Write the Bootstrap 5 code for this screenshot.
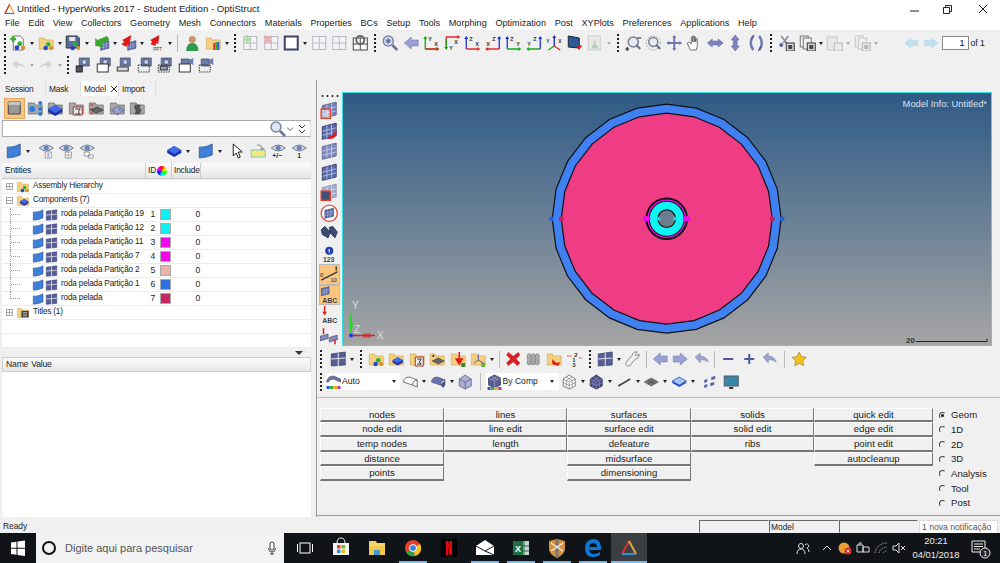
<!DOCTYPE html>
<html lang="en">
<head>
<meta charset="UTF-8">
<title>HyperWorks 2017</title>
<link href="https://cdn.jsdelivr.net/npm/bootstrap@5.3.2/dist/css/bootstrap.min.css" rel="stylesheet">
<style>
html,body{height:100%}
body{width:1000px;height:563px;overflow:hidden;background:#f0f0f0;font:9px/1 "Liberation Sans",Arial,sans-serif;color:#222}
svg text{font-family:"Liberation Sans",Arial,sans-serif}
.title-bar{height:16px;background:#fff;font-size:9.6px;padding:1px 0 0 3px}
.title-bar .app{width:13px;height:12px;margin-right:1px}
.win-btn{width:34px;height:12px}
.menu-bar{height:14px;background:#fff;padding:2px 0 0 5px;gap:8.7px;font-size:9.1px}
.tools{height:50px;padding:3px 0 0 2px}
.tb-row{height:20px;margin-bottom:2px}
.ti{width:20.5px;height:16px;flex:none}
.fd{opacity:.33}
.cr{width:7px;height:16px;flex:none;display:flex;align-items:center;justify-content:center}
.cr::before{content:"";border:2px solid transparent;border-top:3px solid #222;border-bottom:0}
.hd{width:10px;height:20px;flex:none;background:radial-gradient(circle,#222 .9px,transparent 1.2px) center/4px 4px repeat-y}
.hd-s{width:6px}
.vsep{width:1px;height:17px;background:#bbb;flex:none;margin:0 4px}
.vsep-n{margin:0 3px}
.gap-a{margin-left:21.5px}
.page-box{width:27px;height:14px;background:#fff;border:1px solid #888;text-align:right;padding:2px 3px;font-size:9px;color:#111}
.of-txt{margin-left:2px;font-size:8.6px}
.work{height:437px}
.left-pane{width:317px;flex:none;border-right:1px solid #9a9a9a;padding-left:2px;font-size:8.2px;letter-spacing:-.18px}
.tabs{height:15px;margin-top:1px;font-size:8.4px}
.tab-x{height:15px;display:flex;align-items:center;padding:1px 0 0 3px;border-right:1px solid #ddd}
.tab-a{width:44px}.tab-b{width:35px}.tab-c{width:38px;background:#fff}.tab-d{width:37px}
.ic-row{height:22px;padding-left:2px;margin-top:1px}
.ic-on{background:#fbc57e;outline:1px solid #e0a860;outline-offset:-1px;height:21px}
.srch{width:309px;height:17px;background:#fff;border:1px solid #aaa;border-right-color:#ddd;padding-right:4px;margin-top:1px}
.srch .ti{width:16px}
.row3{height:22px;margin-top:3px;padding-left:2px}
.push-a{margin-left:67px}
.grid-h{width:309px;height:16px;margin-top:1px;background:linear-gradient(#fbfbfb,#e6e6e6);border-bottom:1px solid #ccc;font-size:8.4px}
.h-a{width:144px;padding-left:3px;border-right:1px solid #ccc;height:100%;display:flex;align-items:center}
.h-b{width:26px;padding-left:2px;border-right:1px solid #ccc;height:100%;display:flex;align-items:center;gap:1px}
.h-c{width:29px;padding-left:2px;border-right:1px solid #ccc;height:100%;display:flex;align-items:center}
.wheel{width:10px;height:10px;border-radius:50%;background:conic-gradient(#f00,#ff0,#0f0,#0ff,#00f,#f0f,#f00)}
.tree{width:309px;height:168px;background:#fff;margin-top:1px}
.t-row{height:14px;border-bottom:1px solid #e6eef6}
.t-box{width:7px;height:7px;border:1px solid #aaa;margin:0 3px 0 4px;flex:none;background:linear-gradient(#aaa,#aaa) center/5px 1px no-repeat,#fff}
.t-plus{background:linear-gradient(#aaa,#aaa) center/5px 1px no-repeat,linear-gradient(#aaa,#aaa) center/1px 5px no-repeat,#fff}
.t-ico{width:14px;height:13px;flex:none;margin-right:3px}
.t-guide{width:22px;height:14px;margin-left:8px;flex:none;border-left:1px dotted #999;position:relative}
.t-guide::after{content:"";position:absolute;left:0;top:6px;width:9px;border-top:1px dotted #999}
.t-end{align-self:flex-start;height:7px}
.t-sm{width:13px;height:12px;flex:none}
.t-name{width:84px;margin-left:3px;white-space:nowrap;flex:none}
.t-id{width:8px;text-align:right;flex:none;margin-left:2px;font-size:8.6px}
.swatch{width:11px;height:11px;margin-left:5px;border:1px solid #aaa;flex:none}
.c-a{background:#0ef0f2}.c-b{background:#f008ea}.c-c{background:#e8b3ab}.c-d{background:#2f70e4}.c-e{background:#c32862}
.t-zero{width:29px;text-align:right;flex:none;font-size:8.6px}
.sash{height:9px;width:309px;padding:3px 8px 0 0}
.sash i{border:4px solid transparent;border-top:4px solid #333;border-bottom:0;height:0}
.nv-head{width:309px;height:15px;background:linear-gradient(#fbfbfb,#e8e8e8);border:1px solid #ccc;padding-left:3px;font-size:8.6px;gap:3px}
.nv-body{width:309px;background:#fff}
.right-pane{min-width:0}
.view-row{height:254px;margin-top:12px}
.strip{width:25px;flex:none;padding-left:2px}
.strip .hz{height:8px;width:20px;margin-left:1px;background:radial-gradient(circle,#222 .9px,transparent 1.2px) left center/5px 4px repeat-x}
.strip .ti{height:20.5px;padding:1px}
.st-on{background:#fcc67f;outline:1px solid #bbb;outline-offset:-1px}
.viewport{width:650px;height:254px;flex:none;position:relative;border:1px solid #2fe0e4;background:linear-gradient(#2e5a86,#a5a5a5);overflow:hidden}
.viewport svg{position:absolute;left:-1px;top:-1px}
.model-info{position:absolute;right:4px;top:6px;color:#dce2ea;font-size:9.4px}
.r-tools{margin-top:3px;height:21px;padding-left:1px}
.r-tools2{height:20px;padding-left:1px;margin-top:2px}
.combo{height:17px;background:#fff;width:75px;flex:none;padding-right:3px;margin-left:1px;font-size:8.6px}
.combo .ti{width:17px}
.combo .cr{margin-left:auto}
.combo-b{width:73px}
.rule{height:0;border-top:1px solid #bcbcbc;margin:5px 0 10px}
.cmd-wrap{padding-left:3px;height:109px;font-size:9.6px}
.cmd-grid{display:grid;grid-template-columns:124px 123px 124px 123px 119px;grid-auto-rows:14.7px;width:613px;flex:none}
.cmd{--bs-btn-padding-y:0;--bs-btn-padding-x:0;--bs-btn-font-size:9.6px;--bs-btn-border-radius:0;--bs-btn-bg:#f0f0f0;--bs-btn-color:#222;font-family:inherit;line-height:1;background:#f0f0f0;color:#222;border:1px solid;border-color:#fff #777 #777 #fff;border-width:1px 1px 2px 1px}
.radios{margin-left:6px;font-size:9.6px}
.r-item{height:14.7px;display:flex;align-items:center;gap:5px}
.r-dot{width:7px;height:7px;border-radius:50%;border:1px solid;border-color:#444 #eee #eee #444;flex:none;display:flex;align-items:center;justify-content:center}
.r-on::after{content:"";width:3px;height:3px;border-radius:50%;background:#111}
.bottom-rule{border-top:1px solid #999;margin-top:auto;margin-bottom:1px}
.status{height:16px;font-size:8.4px;padding:3px 0 0 3px}
.seg{height:13px;border:1px solid;border-color:#666 #eee #eee #666;flex:none;padding:2px 1px}
.seg-a{width:70px;margin-left:auto}.seg-b{width:70px}.seg-c{width:79px}
.toast-n{width:79px;height:14px;margin:0 2px 0 1px;background:#fff;border:1px solid #ddd;color:#555;white-space:nowrap;padding:2px;font-size:8.6px}
.taskbar{height:30px;background:#101418;color:#fff}
.win-logo{width:36px;height:30px;flex:none}
.search-box{width:248px;height:30px;background:#f2f2f2;color:#555;font-size:11px;flex:none;padding:1px 0 0 29px;position:relative}
.search-box .ring{position:absolute;left:6px;top:8px;width:14px;height:14px;border:2px solid #111;border-radius:50%}
.search-box svg{position:absolute;right:6px;top:8px;width:12px;height:14px}
.t-gap{width:3px;flex:none}
.app-cell{width:36px;height:30px;flex:none;position:relative}
.app-cell svg{width:100%;height:100%;display:block}
.run::after{content:"";position:absolute;left:4px;right:4px;bottom:0;height:2px;background:#76b9ed}
.app-on{background:#3b3f42}
.app-on::after{left:0;right:0}
.tray-a{width:18px;height:30px;flex:none}
.clock{width:50px;text-align:center;font-size:9.4px;line-height:14px;flex:none;color:#eee;margin-left:3px}
.note{width:39px;height:30px;flex:none}
</style>
</head>
<body class="d-flex flex-column">

<svg width="0" height="0" class="position-absolute">
<defs>
<symbol id="mesh" viewBox="0 0 16 16"><path d="M2 4 14 1v11L2 15z" fill="#5a6aae" stroke="#2f3a70" stroke-width=".8"/><path d="M6 3v11M10 2v11M2 8l12-3M2 11.5l12-3" stroke="#d0d6ea" stroke-width=".6" fill="none"/></symbol>
<symbol id="sheet" viewBox="0 0 16 16"><path d="M1 4q6 1 13-3v11q-7 3-13 3z" fill="#3f7fd8" stroke="#2a4f90" stroke-width=".7"/></symbol>
<symbol id="grid" viewBox="0 0 16 16"><rect x="1.5" y="1.5" width="13" height="13" fill="#fff" stroke="#44507a"/><path d="M8 1.5v13M1.5 8h13" stroke="#44507a"/></symbol>
<symbol id="folder" viewBox="0 0 16 16"><path d="M1 5V3h5l1 2h8v9H1z" fill="#f6d07e" stroke="#c9a250" stroke-width=".6"/></symbol>
<symbol id="gfold" viewBox="0 0 16 16"><path d="M1 6V3h6l1 2h7v9H1z" fill="#a8a8a8" stroke="#666" stroke-width=".7"/></symbol>
<symbol id="balls" viewBox="0 0 16 16"><circle cx="8" cy="7" r="3" fill="#2fb030"/><circle cx="4.5" cy="12" r="3" fill="#2b45c8"/><circle cx="12" cy="12" r="2.8" fill="#d89030"/></symbol>
<symbol id="cube" viewBox="0 0 16 16"><path d="M1 7l7-4 7 4v3l-7 4-7-4z" fill="#1f2fa8"/><path d="M1 7l7-4 7 4-7 4z" fill="#3f6ae8"/></symbol>

<symbol id="doc" viewBox="0 0 16 16"><path d="M3 1h7l3 3v11H3z" fill="#fff" stroke="#777"/><path d="M3 1v6M0 4h6" stroke="#46a838" stroke-width="2.4"/><use href="#balls" x="3" y="3" width="13" height="13"/></symbol>
<symbol id="foldb" viewBox="0 0 16 16"><use href="#folder"/><use href="#balls" x="4" y="4" width="12" height="12"/></symbol>
<symbol id="save" viewBox="0 0 16 16"><path d="M1 1h11l2 2v10H1z" fill="#5a6fa0" stroke="#333"/><rect x="4" y="2" width="6" height="4" fill="#e8e8e8"/><use href="#balls" x="4" y="4" width="12" height="12"/></symbol>
<symbol id="garr" viewBox="0 0 16 16"><use href="#mesh" x="6" y="5" width="11" height="11"/><path d="M14 1 4 5 2 3v8l8 1-2-3 8-4z" fill="#3aa82a"/></symbol>
<symbol id="rarr" viewBox="0 0 16 16"><use href="#mesh" x="6" y="5" width="11" height="11"/><path d="M11 0 2 5l2 2-3 2 5 3 1-3 2 2z" fill="#e01818"/></symbol>
<symbol id="ppt" viewBox="0 0 16 16"><path d="M11 0 2 5l2 2-2 2 5 2 1-3 2 1z" fill="#e01818"/><text x="5" y="15.500" font-size="4.500" fill="#333">PPT</text></symbol>
<symbol id="person" viewBox="0 0 16 16"><circle cx="8" cy="4.500" r="3.500" fill="#c89468"/><path d="M2 16q0-8 6-8t6 8z" fill="#2e9a4a"/></symbol>
<symbol id="foldr" viewBox="0 0 16 16"><use href="#folder"/><path d="M8 8h2v7H8z" fill="#e8302a"/><path d="M10 7h2v8h-2z" fill="#38b040"/><path d="M12 7h2v8h-2z" fill="#3050d8"/></symbol>
<symbol id="fplus" viewBox="0 0 16 16"><use href="#grid"/><path d="M5 0v9M1 4.500h8" stroke="#35a028" stroke-width="2.500"/></symbol>
<symbol id="fx" viewBox="0 0 16 16"><use href="#grid"/><path d="M1 1l7 7M8 1 1 8" stroke="#d82020" stroke-width="2.500"/></symbol>
<symbol id="sq" viewBox="0 0 16 16"><rect x="1.500" y="1.500" width="13" height="13" fill="#fff" stroke="#3d4468" stroke-width="2"/></symbol>
<symbol id="wing" viewBox="0 0 16 16"><rect x="1" y="3" width="14" height="12" fill="#fff" stroke="#444"/><path d="M8 3v12M1 9h14" stroke="#444"/><circle cx="8" cy="5" r="4" fill="none" stroke="#666" stroke-width="2"/></symbol>
<symbol id="mag" viewBox="0 0 16 16"><circle cx="6" cy="6" r="5" fill="#dfe6f2" stroke="#7a84aa" stroke-width="1.500"/><path d="M10 10l5 5" stroke="#6a709a" stroke-width="2.500"/></symbol>
<symbol id="magc" viewBox="0 0 16 16"><use href="#mag"/><path d="M3 6h6M6 3v6M4 4l4 4M8 4 4 8" stroke="#4a5890"/></symbol>
<symbol id="laf" viewBox="0 0 16 16"><path d="M1 8l7-6v3h7v6H8v3z" fill="#98a0d4" stroke="#7a80b0" stroke-width=".6"/></symbol>
<symbol id="raf" viewBox="0 0 16 16"><path d="M15 8 8 2v3H1v6h7v3z" fill="#98a0d4" stroke="#7a80b0" stroke-width=".6"/></symbol>
<symbol id="axA" viewBox="0 0 16 16"><path d="M2 14V2M2 14h13" fill="none" stroke="#18a818" stroke-width="1.300"/><path d="M2 14h13" stroke="#e82828" stroke-width="1.300"/><path d="M0 4l2-3 2 3zM13 12l3 2-3 2z" fill="#18a818"/><path d="M13 12l3 2-3 2z" fill="#e82828"/><text x="5" y="6" font-size="5.500" font-weight="700" fill="#333">Y</text><text x="11" y="11" font-size="5.500" font-weight="700" fill="#333">X</text></symbol>
<symbol id="axB" viewBox="0 0 16 16"><path d="M2 14V2h13" fill="none" stroke="#e82828" stroke-width="1.300"/><path d="M2 14V4" stroke="#18a818" stroke-width="1.300"/><path d="M0 12l2 3 2-3z" fill="#18a818"/><path d="M13 0l3 2-3 2z" fill="#e82828"/><text x="10" y="9" font-size="5.500" font-weight="700" fill="#333">X</text><text x="5" y="15" font-size="5.500" font-weight="700" fill="#333">Y</text></symbol>
<symbol id="axC" viewBox="0 0 16 16"><path d="M2 14V2" stroke="#2030d8" stroke-width="1.300"/><path d="M2 14h13" stroke="#e82828" stroke-width="1.300"/><path d="M0 4l2-3 2 3z" fill="#2030d8"/><path d="M13 12l3 2-3 2z" fill="#e82828"/><text x="5" y="6" font-size="5.500" font-weight="700" fill="#333">Z</text><text x="11" y="11" font-size="5.500" font-weight="700" fill="#333">X</text></symbol>
<symbol id="axD" viewBox="0 0 16 16"><path d="M14 14V2" stroke="#2030d8" stroke-width="1.300"/><path d="M1 14h13" stroke="#e82828" stroke-width="1.300"/><path d="M12 4l2-3 2 3z" fill="#2030d8"/><path d="M3 12l-3 2 3 2z" fill="#e82828"/><text x="7" y="6" font-size="5.500" font-weight="700" fill="#333">Z</text><text x="1" y="11" font-size="5.500" font-weight="700" fill="#333">X</text></symbol>
<symbol id="axE" viewBox="0 0 16 16"><path d="M2 14V2" stroke="#2030d8" stroke-width="1.300"/><path d="M2 14h13" stroke="#18a818" stroke-width="1.300"/><path d="M0 4l2-3 2 3z" fill="#2030d8"/><path d="M13 12l3 2-3 2z" fill="#18a818"/><text x="5" y="6" font-size="5.500" font-weight="700" fill="#333">Z</text><text x="11" y="11" font-size="5.500" font-weight="700" fill="#333">Y</text></symbol>
<symbol id="axF" viewBox="0 0 16 16"><path d="M14 14V2" stroke="#2030d8" stroke-width="1.300"/><path d="M1 14h13" stroke="#18a818" stroke-width="1.300"/><path d="M12 4l2-3 2 3z" fill="#2030d8"/><path d="M3 12l-3 2 3 2z" fill="#18a818"/><text x="7" y="6" font-size="5.500" font-weight="700" fill="#333">Z</text><text x="1" y="11" font-size="5.500" font-weight="700" fill="#333">Y</text></symbol>
<symbol id="axG" viewBox="0 0 16 16"><path d="M8 11V2" stroke="#2030d8" stroke-width="1.400"/><path d="M8 11 2 15" stroke="#18a818" stroke-width="1.400"/><path d="M8 11l6 4" stroke="#e82828" stroke-width="1.400"/><path d="M6 3l2-3 2 3z" fill="#2030d8"/><text x="0" y="8" font-size="5" font-weight="700" fill="#333">Y</text><text x="12" y="8" font-size="5" font-weight="700" fill="#333">X</text></symbol>
<symbol id="mon" viewBox="0 0 16 16"><path d="M1 1l11 2v10L1 12z" fill="#285a9a" stroke="#222"/><path d="M15 10l-3 5-3-3 2-1z" fill="#e01818"/></symbol>
<symbol id="perf" viewBox="0 0 16 16"><rect x="1" y="1" width="12" height="14" fill="#ddd" stroke="#888"/><use href="#person" x="3" y="3" width="9" height="12"/></symbol>
<symbol id="zmin" viewBox="0 0 16 16"><circle cx="8" cy="7" r="5" fill="#e4eaf2" stroke="#7a7f90" stroke-width="1.500"/><path d="M12 3h4M0 14h4M2 12v4" stroke="#222" stroke-width="1.200"/><path d="M11 10l4 4" stroke="#6a6f88" stroke-width="2"/></symbol>
<symbol id="zwin" viewBox="0 0 16 16"><circle cx="8" cy="7" r="4.500" fill="#e4eaf2" stroke="#7a7f90" stroke-width="1.500"/><circle cx="8" cy="8" r="7" fill="none" stroke="#777" stroke-dasharray="1.500 1.500" stroke-width=".7"/><path d="M11 10l4 4" stroke="#6a6f88" stroke-width="2"/></symbol>
<symbol id="move" viewBox="0 0 16 16"><path d="M8 1v14M1 8h14" stroke="#7278b0" stroke-width="2"/><path d="M6 3l2-3 2 3zM6 13l2 3 2-3zM3 6 0 8l3 2zM13 6l3 2-3 2z" fill="#7278b0"/></symbol>
<symbol id="hand" viewBox="0 0 16 16"><path d="M4 15 1 8l2-1 2 2V2h1.500v5V1h1.500v6V2h1.500v5V4H11v7l-1 4z" fill="#fff" stroke="#555" stroke-width=".8"/></symbol>
<symbol id="hh" viewBox="0 0 16 16"><path d="M0 8l5-4v2h6V4l5 4-5 4v-2H5v2z" fill="#7c82c0" stroke="#5a6090" stroke-width=".5"/></symbol>
<symbol id="vv" viewBox="0 0 16 16"><path d="M8 0l4 5h-2v6h2l-4 5-4-5h2V5H4z" fill="#7c82c0" stroke="#5a6090" stroke-width=".5"/></symbol>
<symbol id="rot" viewBox="0 0 16 16"><path d="M5 1Q0 8 5 15M11 1q5 7 0 14" fill="none" stroke="#7278b0" stroke-width="2.500"/><path d="M6 0 3 4M10 16l3-4" stroke="#444" stroke-width="1"/></symbol>
<symbol id="scis" viewBox="0 0 16 16"><path d="M3 1l6 8M10 1 5 8" stroke="#8a8aa0" stroke-width="1.500"/><circle cx="3" cy="10" r="2" fill="#5a60a0"/><rect x="8" y="8" width="8" height="8" fill="#d8d8d8" stroke="#333"/><path d="M10 10h4v4h-4z" fill="#445"/></symbol>
<symbol id="copy" viewBox="0 0 16 16"><rect x="1" y="1" width="8" height="11" fill="#eee" stroke="#777"/><rect x="4" y="3" width="8" height="11" fill="#eee" stroke="#777"/><rect x="8" y="8" width="8" height="8" fill="#d8d8d8" stroke="#333"/><path d="M10 10h4v4h-4z" fill="#445"/></symbol>
<symbol id="paste" viewBox="0 0 16 16"><rect x="1" y="2" width="10" height="13" fill="#ddd" stroke="#777"/><rect x="4" y="1" width="4" height="3" fill="#bbb"/><rect x="8" y="8" width="8" height="8" fill="#d8d8d8" stroke="#555"/></symbol>
<symbol id="lal" viewBox="0 0 16 16"><path d="M1 8l7-6v3h7v6H8v3z" fill="#bfe0ec"/></symbol>
<symbol id="lar" viewBox="0 0 16 16"><path d="M15 8 8 2v3H1v6h7v3z" fill="#bfe0ec"/></symbol>
<symbol id="undo" viewBox="0 0 16 16"><path d="M2 7l5-4v3q6 0 8 5-4-3-8-2v3z" fill="#d4d4d4"/></symbol>
<symbol id="redo" viewBox="0 0 16 16"><path d="M14 7 9 3v3q-6 0-8 5 4-3 8-2v3z" fill="#d4d4d4"/></symbol>
<symbol id="cam" viewBox="0 0 16 16"><path d="M4 1h10v8H4z" fill="#6d7ca8" stroke="#394468" stroke-width=".7"/><circle cx="9" cy="5" r="2.500" fill="#c8d0e8" stroke="#394468" stroke-width=".7"/></symbol>
<symbol id="cam1" viewBox="0 0 16 16"><use href="#cam"/><rect x="1" y="9" width="6" height="6" fill="#556" stroke="#222"/></symbol>
<symbol id="cam2" viewBox="0 0 16 16"><use href="#cam"/><rect x="1" y="7" width="11" height="8" fill="#fff" stroke="#333"/></symbol>
<symbol id="cam3" viewBox="0 0 16 16"><use href="#cam"/><rect x="1" y="10" width="11" height="4" fill="#d8d8d8" stroke="#333"/></symbol>
<symbol id="cam4" viewBox="0 0 16 16"><use href="#cam"/><rect x="1" y="8" width="11" height="7" fill="none" stroke="#333" stroke-dasharray="1.500 1"/></symbol>
<symbol id="cam5" viewBox="0 0 16 16"><use href="#cam"/><rect x="1" y="8" width="11" height="7" fill="none" stroke="#333" stroke-dasharray="1.500 1"/><rect x="3" y="9" width="7" height="4" fill="#99a" stroke="#333"/></symbol>
<symbol id="vid" viewBox="0 0 16 16"><path d="M3 2h8v7H3z" fill="#6d7ca8" stroke="#394468" stroke-width=".7"/><path d="M11 3l4-2v7l-4-2z" fill="#6d7ca8"/></symbol>
<symbol id="vid1" viewBox="0 0 16 16"><use href="#vid"/><rect x="1" y="7" width="11" height="8" fill="#fff" stroke="#333"/></symbol>
<symbol id="vid2" viewBox="0 0 16 16"><use href="#vid"/><rect x="1" y="8" width="11" height="7" fill="none" stroke="#333" stroke-dasharray="1.500 1"/></symbol>

<symbol id="pnl" viewBox="0 0 16 16"><path d="M2 2h12v12H2z" fill="#999" stroke="#444"/><path d="M2 2h12v3H2z" fill="#c4c4c4"/></symbol>
<symbol id="pnet" viewBox="0 0 16 16"><use href="#gfold"/><circle cx="13" cy="3" r="2" fill="#2a7ad8"/><circle cx="5" cy="9" r="3" fill="#2a7ad8"/><circle cx="13" cy="9" r="2" fill="#2a7ad8"/><circle cx="13" cy="14" r="2" fill="#2a7ad8"/></symbol>
<symbol id="pcube" viewBox="0 0 16 16"><use href="#gfold"/><use href="#cube" y="2"/></symbol>
<symbol id="pmat" viewBox="0 0 16 16"><use href="#gfold"/><path d="M5 7h9v8H5z" fill="#eee" stroke="#a33"/><path d="M7 9h5l-2 3 2 2H7" fill="none" stroke="#333"/></symbol>
<symbol id="pprop" viewBox="0 0 16 16"><use href="#gfold"/><path d="M2 10l7-3 6 3-7 3z" fill="#666" stroke="#222" stroke-width=".6"/><path d="M2 5h3M2 9h2M2 13h3" stroke="#d82020"/></symbol>
<symbol id="pmesh" viewBox="0 0 16 16"><use href="#gfold"/><path d="M2 10l7-4 6 4-7 5z" fill="#8a90c8" stroke="#666" stroke-width=".7"/><path d="M5 8l6 5M9 6l-3 7" stroke="#ccd" stroke-width=".6"/></symbol>
<symbol id="pbolt" viewBox="0 0 16 16"><use href="#gfold"/><path d="M6 5h5l-1 3 2 2-2 4H6l1-4-2-2z" fill="#555" stroke="#333" stroke-width=".5"/></symbol>
<symbol id="eye" viewBox="0 0 16 16"><path d="M1 5q7-6 14 0-7 6-14 0z" fill="#c8d4e4" stroke="#667" stroke-width=".8"/><circle cx="8" cy="5" r="2.500" fill="#6a86b8"/></symbol>
<symbol id="eyel1" viewBox="0 0 16 16"><use href="#eye"/><path d="M7 9h6v6H7z" fill="#fff" stroke="#666" stroke-width=".6"/><path d="M9 11h2M9 13h2" stroke="#2a60c8"/></symbol>
<symbol id="eyel2" viewBox="0 0 16 16"><use href="#eye"/><path d="M7 9h6v6H7z" fill="#fff" stroke="#666" stroke-width=".6"/><path d="M10 9v6M7 12h6" stroke="#888" stroke-width=".6"/></symbol>
<symbol id="eyel3" viewBox="0 0 16 16"><use href="#eye"/><path d="M5 9h5v4H5zM9 12h5v3H9z" fill="#fff" stroke="#666" stroke-width=".6"/></symbol>
<symbol id="eyepm" viewBox="0 0 16 16"><use href="#eye"/><text x="2" y="15" font-size="7" font-weight="700" fill="#333">+/−</text></symbol>
<symbol id="eye1" viewBox="0 0 16 16"><use href="#eye"/><text x="6" y="15" font-size="7" font-weight="700" fill="#333">1</text></symbol>
<symbol id="curs" viewBox="0 0 16 16"><path d="M4 1v12l3-3 2 5 2-1-2-5h4z" fill="#fff" stroke="#222"/></symbol>
<symbol id="nt" viewBox="0 0 16 16"><rect x="1" y="7" width="14" height="7" fill="#f2ea78" stroke="#7ac8d8"/><path d="M7 2q5 0 5 4M10 5l2 2 2-2" fill="none" stroke="#777"/></symbol>
<symbol id="titl" viewBox="0 0 16 16"><use href="#folder"/><rect x="6" y="6" width="9" height="8" fill="#444"/><path d="M8 8h5M8 10h5M8 12h5" stroke="#eee" stroke-width=".7"/></symbol>
<symbol id="fcube" viewBox="0 0 16 16"><use href="#folder"/><use href="#cube" x="3" y="4" width="13" height="12"/></symbol>
<symbol id="fhist" viewBox="0 0 16 16"><use href="#folder"/><path d="M6 6h8v9H6z" fill="#eee" stroke="#a33"/><path d="M8 8h4l-2 3 2 2H8" fill="none" stroke="#333"/></symbol>
<symbol id="fprop" viewBox="0 0 16 16"><use href="#folder"/><path d="M3 10l6-3 6 3-6 3z" fill="#666" stroke="#222" stroke-width=".5"/><path d="M3 5h2M4 4v2" stroke="#222"/></symbol>
<symbol id="fred" viewBox="0 0 16 16"><use href="#folder"/><path d="M9 1v9M6 8l3 5 3-5z" stroke="#e01818" fill="#e01818" stroke-width="1.500"/><rect x="11" y="12" width="4" height="4" fill="#3a8a2a"/></symbol>
<symbol id="fax" viewBox="0 0 16 16"><use href="#folder"/><path d="M8 9V3M8 9l5 3M8 9l-4 3" stroke="#4a5aa8"/><rect x="11" y="12" width="4" height="4" fill="#6ab030"/></symbol>
<symbol id="dx" viewBox="0 0 16 16"><path d="M3 1l5 4 5-4 2 3-4 4 4 4-3 3-4-4-5 4-2-3 4-4-4-4z" fill="#d8232a"/></symbol>
<symbol id="stack" viewBox="0 0 16 16"><path d="M2 4q2-3 4 0v9q-2 2-4 0z" fill="#aaa" stroke="#777" stroke-width=".6"/><path d="M6 4q2-3 4 0v9q-2 2-4 0z" fill="#aaa" stroke="#777" stroke-width=".6"/><path d="M10 4q2-3 4 0v9q-2 2-4 0z" fill="#aaa" stroke="#777" stroke-width=".6"/></symbol>
<symbol id="frd" viewBox="0 0 16 16"><use href="#folder"/><path d="M6 8l4 4 4-1-2 4-6-2z" fill="#e01818"/></symbol>
<symbol id="num" viewBox="0 0 16 16"><text x="8" y="5.500" font-size="6" font-weight="700" fill="#333">2</text><text x="6" y="10.500" font-size="6" font-weight="700" fill="#333">1</text><text x="6" y="16" font-size="6" font-weight="700" fill="#333">3</text><path d="M1 5h4M13 7h3" stroke="#e01818" stroke-dasharray="1.500 1"/></symbol>
<symbol id="pane" viewBox="0 0 16 16"><path d="M1 3l14-2v13L1 15z" fill="#585e94" stroke="#2f3a70" stroke-width=".7"/><path d="M8 2v13M1 8l14-1" stroke="#e4e8f4" stroke-width="1"/></symbol>
<symbol id="wrench" viewBox="0 0 16 16"><path d="M15 3l-3 2-1-1 2-3q-4-1-5 3L2 11q-2 3 1 4t4-2l4-5q4 0 4-5z" fill="#eee" stroke="#777" stroke-width=".8"/></symbol>
<symbol id="undob" viewBox="0 0 16 16"><path d="M2 6l5-4v3q6 0 8 6-4-3-8-2v3z" fill="#98a4d6" stroke="#778" stroke-width=".5"/></symbol>
<symbol id="star" viewBox="0 0 16 16"><path d="M8 1l2.200 4.600 5 .7-3.600 3.500.9 5L8 12.400 3.500 14.800l.9-5L.8 6.300l5-.7z" fill="#f0c020" stroke="#a07a10" stroke-width=".6"/></symbol>
<symbol id="autos" viewBox="0 0 16 16"><path d="M1 8q1-6 7-6l7 3v3L8 5Q4 5 3 8z" fill="#6a72b4" stroke="#445" stroke-width=".6"/><path d="M1 12h3v3H1z" fill="#3050d8"/><path d="M4 12h4v3H4z" fill="#38b040"/><path d="M8 12h4v3H8z" fill="#e8b020"/><path d="M12 12h3v3h-3z" fill="#c03098"/></symbol>
<symbol id="bycomp" viewBox="0 0 16 16"><path d="M2 4l6-3 6 3v7l-6 3-6-3z" fill="#585e94" stroke="#2a2f60" stroke-width=".7"/><path d="M2 4l6 3 6-3M8 7v7M5 2.500l6 3M11 2.500l-6 3" stroke="#b8c0e0" stroke-width=".5" fill="none"/><path d="M1 13h3v3H1z" fill="#3050d8"/><path d="M4 13h4v3H4z" fill="#38b040"/><path d="M8 13h4v3H8z" fill="#e8b020"/><path d="M12 13h3v3h-3z" fill="#c03098"/></symbol>
<symbol id="surf0" viewBox="0 0 16 16"><path d="M1 8q1-5 6-5l8 3q-4 0-5 5L1 8z" fill="#fff" stroke="#555" stroke-width=".8"/><path d="M10 11l5 2q0-4 0-7" fill="none" stroke="#555" stroke-width=".8"/></symbol>
<symbol id="surf1" viewBox="0 0 16 16"><path d="M1 8q1-5 6-5l8 3q-4 0-5 5z" fill="#6a72b4" stroke="#445" stroke-width=".6"/><path d="M10 11l5-5v5l-2 3z" fill="#4a508a"/></symbol>
<symbol id="box3" viewBox="0 0 16 16"><path d="M2 5l6-4 6 4v7l-6 3-6-3z" fill="#aab0d8" stroke="#556" stroke-width=".7"/><path d="M2 5l6 3 6-3M8 8v7" stroke="#556" stroke-width=".7" fill="none"/></symbol>
<symbol id="wire" viewBox="0 0 16 16"><path d="M2 5l6-4 6 4v7l-6 3-6-3z" fill="#fff" stroke="#555" stroke-width=".7"/><path d="M2 5l6 3 6-3M8 8v7M5 3l6 3.500M11 3 5 6.500M2 8.500l6 3 6-3M5 6.500v7M11 6.500v7" stroke="#555" stroke-width=".5" fill="none"/></symbol>
<symbol id="cube3" viewBox="0 0 16 16"><path d="M2 5l6-4 6 4v7l-6 3-6-3z" fill="#474d90" stroke="#223" stroke-width=".7"/><path d="M2 5l6 3 6-3M8 8v7M5 3l6 3.500M11 3 5 6.500M2 8.500l6 3 6-3M5 6.500v7M11 6.500v7" stroke="#aab" stroke-width=".5" fill="none"/></symbol>
<symbol id="lin" viewBox="0 0 16 16"><path d="M2 12 14 5" stroke="#444" stroke-width="1.500"/></symbol>
<symbol id="flat" viewBox="0 0 16 16"><path d="M1 8l7-4 7 4-7 4z" fill="#777" stroke="#444" stroke-width=".6"/><path d="M4.500 6l7 4M11.500 6l-7 4" stroke="#333" stroke-width=".5"/></symbol>
<symbol id="flatb" viewBox="0 0 16 16"><path d="M1 7l7-4 7 4v2l-7 4-7-4z" fill="#2f50c8"/><path d="M1 7l7-4 7 4-7 4z" fill="#a4c4f4" stroke="#2f50c8" stroke-width=".7"/></symbol>
<symbol id="sqs" viewBox="0 0 16 16"><path d="M2 6l3-1v3l-3 1zM9 3l4-1v3l-4 1zM2 11l3-1v3l-3 1zM8 9l4-1v3l-4 1z" fill="#5a64a8"/></symbol>
<symbol id="screen" viewBox="0 0 16 16"><rect x="1" y="2" width="14" height="10" fill="#3a86a8" stroke="#4a5a6a"/><path d="M6 13h4v2H6z" fill="#333"/></symbol>

<symbol id="s1" viewBox="0 0 16 16"><use href="#mesh" opacity=".8"/><rect x="1" y="7" width="8" height="8" fill="#fff" fill-opacity=".5" stroke="#e0402a" stroke-width="1.200"/></symbol>
<symbol id="s2" viewBox="0 0 16 16"><use href="#mesh"/><path d="M15 8l-3 6-6 1 3-3 3-1-1-2z" fill="#e01818"/></symbol>
<symbol id="s3" viewBox="0 0 16 16"><use href="#mesh" opacity=".75"/></symbol>
<symbol id="s5" viewBox="0 0 16 16"><use href="#mesh" opacity=".5"/><rect x="1" y="7" width="8" height="8" fill="#44507a" stroke="#e0402a" stroke-width="1.200"/></symbol>
<symbol id="s6" viewBox="0 0 16 16"><circle cx="8" cy="8" r="7" fill="#fff" stroke="#e05a4a" stroke-width="1.200"/><use href="#mesh" x="3" y="3" width="10" height="10"/></symbol>
<symbol id="binoc" viewBox="0 0 16 16"><path d="M1 5l3-3 5 5-2 5-5-3zM8 3l3-1 4 5-2 5-4-4z" fill="#3c4a78" stroke="#1d2540" stroke-width=".6"/></symbol>
<symbol id="i123" viewBox="0 0 16 16"><circle cx="8" cy="5" r="3.500" fill="#1f3fb0"/><path d="M8 3.500v3" stroke="#fff"/><text x="2.500" y="15" font-size="6" font-weight="700" fill="#444">123</text></symbol>
<symbol id="plot" viewBox="0 0 16 16"><path d="M1 13 15 6" stroke="#334" stroke-width="1.200"/><path d="M14 1v4" stroke="#222"/><text x="0" y="10" font-size="5" fill="#222">0</text><text x="9" y="15" font-size="5" fill="#222">10</text></symbol>
<symbol id="abc" viewBox="0 0 16 16"><use href="#mesh" x="0" y="0" width="9" height="9"/><text x="2" y="15" font-size="6" font-weight="700" fill="#444">ABC</text></symbol>
<symbol id="rabc" viewBox="0 0 16 16"><path d="M4 0v7" stroke="#e01818" stroke-width="1.200"/><path d="M2 5l2 3 2-3z" fill="#e01818"/><text x="2" y="15" font-size="6" font-weight="700" fill="#444">ABC</text></symbol>
<symbol id="marr" viewBox="0 0 16 16"><path d="M0 8l7-2v4L0 12zM8 9l7-2v4l-7 2z" fill="#8088bc" stroke="#445" stroke-width=".5"/><path d="M3 1v5M13 11v4" stroke="#e01818" stroke-width="1.300"/></symbol>
</defs>
</svg>

<div class="title-bar d-flex align-items-center">
  <svg class="app" viewBox="0 0 16 16"><path d="M8 2 2 14h12z" fill="none" stroke="#e8a838" stroke-width="1.600"/><path d="M8 2 2 14" stroke="#d83030" stroke-width="1.600"/><path d="M2 14h12" stroke="#3a70c8" stroke-width="1.600"/></svg>
  <span>Untitled - HyperWorks 2017 - Student Edition - OptiStruct</span>
  <div class="ms-auto d-flex">
    <svg class="win-btn" viewBox="0 0 34 12"><path d="M12 8h9" stroke="#222"/></svg>
    <svg class="win-btn" viewBox="0 0 34 12"><path d="M11.500 4.500h6v6h-6zM13.500 4.500v-2h6v6h-2" fill="none" stroke="#222"/></svg>
    <svg class="win-btn" viewBox="0 0 34 12"><path d="M13 2l8 8M21 2l-8 8" stroke="#222"/></svg>
  </div>
</div>
<div class="menu-bar d-flex align-items-center">
  <span>File</span><span>Edit</span><span>View</span><span>Collectors</span><span>Geometry</span><span>Mesh</span><span>Connectors</span><span>Materials</span><span>Properties</span><span>BCs</span><span>Setup</span><span>Tools</span><span>Morphing</span><span>Optimization</span><span>Post</span><span>XYPlots</span><span>Preferences</span><span>Applications</span><span>Help</span>
</div>

<div class="tools">
  <div class="tb-row d-flex align-items-center">
    <i class="hd hd-s"></i>
    <svg class="ti"><use href="#doc"/></svg><i class="cr"></i>
    <svg class="ti"><use href="#foldb"/></svg><i class="cr"></i>
    <svg class="ti"><use href="#save"/></svg><i class="cr"></i>
    <svg class="ti"><use href="#garr"/></svg><i class="cr"></i>
    <svg class="ti"><use href="#rarr"/></svg><i class="cr"></i>
    <svg class="ti"><use href="#ppt"/></svg><i class="cr"></i>
    <i class="vsep"></i>
    <svg class="ti"><use href="#person"/></svg>
    <svg class="ti"><use href="#foldr"/></svg><i class="cr"></i>
    <i class="hd"></i>
    <svg class="ti fd"><use href="#fplus"/></svg>
    <svg class="ti fd"><use href="#fx"/></svg>
    <svg class="ti"><use href="#sq"/></svg><i class="cr"></i>
    <svg class="ti fd"><use href="#grid"/></svg>
    <svg class="ti fd"><use href="#grid"/></svg>
    <svg class="ti"><use href="#wing"/></svg>
    <i class="hd"></i>
    <svg class="ti"><use href="#magc"/></svg>
    <svg class="ti"><use href="#laf"/></svg>
    <svg class="ti"><use href="#axA"/></svg>
    <svg class="ti"><use href="#axB"/></svg>
    <svg class="ti"><use href="#axC"/></svg>
    <svg class="ti"><use href="#axD"/></svg>
    <svg class="ti"><use href="#axE"/></svg>
    <svg class="ti"><use href="#axF"/></svg>
    <svg class="ti"><use href="#axG"/></svg>
    <svg class="ti"><use href="#mon"/></svg>
    <svg class="ti fd"><use href="#perf"/></svg><i class="cr fd"></i>
    <i class="hd"></i>
    <svg class="ti"><use href="#zmin"/></svg>
    <svg class="ti"><use href="#zwin"/></svg>
    <svg class="ti"><use href="#move"/></svg>
    <svg class="ti"><use href="#hand"/></svg>
    <svg class="ti"><use href="#hh"/></svg>
    <svg class="ti"><use href="#vv"/></svg>
    <svg class="ti"><use href="#rot"/></svg>
    <i class="hd"></i>
    <svg class="ti"><use href="#scis"/></svg>
    <svg class="ti"><use href="#copy"/></svg><i class="cr"></i>
    <svg class="ti fd"><use href="#paste"/></svg><i class="cr fd"></i>
    <svg class="ti fd"><use href="#copy"/></svg><i class="cr fd"></i>
    <svg class="ti gap-a"><use href="#lal"/></svg>
    <svg class="ti"><use href="#lar"/></svg>
    <div class="page-box">1</div><span class="of-txt">of 1</span>
  </div>
  <div class="tb-row d-flex align-items-center">
    <i class="hd hd-s"></i>
    <svg class="ti"><use href="#undo"/></svg><i class="cr fd"></i>
    <svg class="ti"><use href="#redo"/></svg><i class="cr fd"></i>
    <i class="hd"></i>
    <svg class="ti"><use href="#cam1"/></svg>
    <svg class="ti"><use href="#cam2"/></svg>
    <svg class="ti"><use href="#cam3"/></svg>
    <svg class="ti"><use href="#cam4"/></svg>
    <svg class="ti"><use href="#cam5"/></svg>
    <svg class="ti"><use href="#vid1"/></svg>
    <svg class="ti"><use href="#vid2"/></svg>
  </div>
</div>

<div class="work d-flex">
  <div class="left-pane d-flex flex-column">
    <div class="tabs d-flex">
      <div class="tab-x tab-a">Session</div>
      <div class="tab-x tab-b">Mask</div>
      <div class="tab-x tab-c">Model<svg class="ms-1" width="8" height="8" viewBox="0 0 8 8"><path d="M1 1l6 6M7 1 1 7" stroke="#333"/></svg></div>
      <div class="tab-x tab-d">Import</div>
    </div>
    <div class="ic-row d-flex align-items-center">
      <div class="ic-on d-flex align-items-center"><svg class="ti"><use href="#pnl"/></svg></div>
      <svg class="ti"><use href="#pnet"/></svg>
      <svg class="ti"><use href="#pcube"/></svg>
      <svg class="ti"><use href="#pmat"/></svg>
      <svg class="ti"><use href="#pprop"/></svg>
      <svg class="ti"><use href="#pmesh"/></svg>
      <svg class="ti"><use href="#pbolt"/></svg>
    </div>
    <div class="srch d-flex align-items-center justify-content-end">
      <svg class="ti"><use href="#mag"/></svg>
      <svg width="8" height="8" viewBox="0 0 8 8"><path d="M1 2.500l3 3 3-3" fill="none" stroke="#666"/></svg>
      <svg width="8" height="10" viewBox="0 0 8 10" class="ms-1"><path d="M1 1l3 3 3-3M1 6l3 3 3-3" fill="none" stroke="#333"/></svg>
    </div>
    <div class="row3 d-flex align-items-center">
      <svg class="ti"><use href="#sheet"/></svg><i class="cr"></i>
      <svg class="ti ms-1"><use href="#eyel1"/></svg>
      <svg class="ti"><use href="#eyel2"/></svg>
      <svg class="ti"><use href="#eyel3"/></svg>
      <svg class="ti push-a"><use href="#cube"/></svg><i class="cr"></i>
      <svg class="ti ms-1"><use href="#sheet"/></svg><i class="cr"></i>
      <svg class="ti ms-1"><use href="#curs"/></svg>
      <svg class="ti"><use href="#nt"/></svg>
      <svg class="ti"><use href="#eyepm"/></svg>
      <svg class="ti"><use href="#eye1"/></svg>
    </div>
    <div class="grid-h d-flex align-items-center">
      <div class="h-a">Entities</div><div class="h-b">ID<i class="wheel"></i></div><div class="h-c">Include</div>
    </div>
    <div class="tree">
      <div class="t-row d-flex align-items-center"><i class="t-box t-plus"></i><svg class="t-ico"><use href="#foldb"/></svg><span>Assembly Hierarchy</span></div>
      <div class="t-row d-flex align-items-center"><i class="t-box"></i><svg class="t-ico"><use href="#fcube"/></svg><span>Components (7)</span></div>
      <div class="t-row d-flex align-items-center"><i class="t-guide"></i><svg class="t-sm"><use href="#sheet"/></svg><svg class="t-sm"><use href="#pane"/></svg><span class="t-name">roda pelada Partição 19</span><span class="t-id">1</span><i class="swatch c-a"></i><span class="t-zero">0</span></div>
      <div class="t-row d-flex align-items-center"><i class="t-guide"></i><svg class="t-sm"><use href="#sheet"/></svg><svg class="t-sm"><use href="#pane"/></svg><span class="t-name">roda pelada Partição 12</span><span class="t-id">2</span><i class="swatch c-a"></i><span class="t-zero">0</span></div>
      <div class="t-row d-flex align-items-center"><i class="t-guide"></i><svg class="t-sm"><use href="#sheet"/></svg><svg class="t-sm"><use href="#pane"/></svg><span class="t-name">roda pelada Partição 11</span><span class="t-id">3</span><i class="swatch c-b"></i><span class="t-zero">0</span></div>
      <div class="t-row d-flex align-items-center"><i class="t-guide"></i><svg class="t-sm"><use href="#sheet"/></svg><svg class="t-sm"><use href="#pane"/></svg><span class="t-name">roda pelada Partição 7</span><span class="t-id">4</span><i class="swatch c-b"></i><span class="t-zero">0</span></div>
      <div class="t-row d-flex align-items-center"><i class="t-guide"></i><svg class="t-sm"><use href="#sheet"/></svg><svg class="t-sm"><use href="#pane"/></svg><span class="t-name">roda pelada Partição 2</span><span class="t-id">5</span><i class="swatch c-c"></i><span class="t-zero">0</span></div>
      <div class="t-row d-flex align-items-center"><i class="t-guide"></i><svg class="t-sm"><use href="#sheet"/></svg><svg class="t-sm"><use href="#pane"/></svg><span class="t-name">roda pelada Partição 1</span><span class="t-id">6</span><i class="swatch c-d"></i><span class="t-zero">0</span></div>
      <div class="t-row d-flex align-items-center"><i class="t-guide t-end"></i><svg class="t-sm"><use href="#sheet"/></svg><svg class="t-sm"><use href="#pane"/></svg><span class="t-name">roda pelada</span><span class="t-id">7</span><i class="swatch c-e"></i><span class="t-zero">0</span></div>
      <div class="t-row d-flex align-items-center"><i class="t-box t-plus"></i><svg class="t-ico"><use href="#titl"/></svg><span>Titles (1)</span></div>
      <div class="t-row"></div><div class="t-row"></div><div class="t-row"></div>
    </div>
    <div class="sash d-flex justify-content-end"><i></i></div>
    <div class="nv-head d-flex align-items-center"><span>Name</span><span>Value</span></div>
    <div class="nv-body flex-grow-1"></div>
  </div>

  <div class="right-pane flex-grow-1 d-flex flex-column">
    <div class="view-row d-flex">
      <div class="strip">
        <div class="hz"></div>
        <svg class="ti"><use href="#s1"/></svg>
        <svg class="ti"><use href="#s2"/></svg>
        <svg class="ti"><use href="#s3"/></svg>
        <svg class="ti"><use href="#mesh"/></svg>
        <svg class="ti"><use href="#s5"/></svg>
        <svg class="ti"><use href="#s6"/></svg>
        <svg class="ti"><use href="#binoc"/></svg>
        <svg class="ti"><use href="#i123"/></svg>
        <svg class="ti st-on"><use href="#plot"/></svg>
        <svg class="ti st-on"><use href="#abc"/></svg>
        <svg class="ti"><use href="#rabc"/></svg>
        <svg class="ti"><use href="#marr"/></svg>
      </div>
      <div class="viewport">
        <svg width="650" height="254" viewBox="0 0 650 254">
          <g transform="translate(324.7 126.7)">
            <polygon fill="#3f80f2" stroke="#111" stroke-width="1.200" points="114.500,0 110.600,29.600 99.200,57.300 81,81 57.300,99.200 29.600,110.600 0,114.500 -29.600,110.600 -57.300,99.200 -81,81 -99.200,57.300 -110.600,29.600 -114.500,0 -110.600,-29.600 -99.200,-57.300 -81,-81 -57.300,-99.200 -29.600,-110.600 0,-114.500 29.600,-110.600 57.300,-99.200 81,-81 99.200,-57.300 110.600,-29.600"/>
            <polygon fill="#ee3c85" stroke="#111" stroke-width="1.200" points="105.500,0 101.900,27.300 91.400,52.750 74.600,74.600 52.750,91.400 27.300,101.900 0,105.500 -27.300,101.900 -52.750,91.400 -74.600,74.600 -91.400,52.750 -101.900,27.300 -105.500,0 -101.900,-27.300 -91.400,-52.750 -74.600,-74.600 -52.750,-91.400 -27.300,-101.900 0,-105.500 27.300,-101.900 52.750,-91.400 74.600,-74.600 91.400,-52.750 101.900,-27.300"/>
            <circle r="21.300" fill="#111"/>
            <circle r="19.300" fill="#f008ea"/>
            <circle r="18" fill="#111"/>
            <circle r="17" fill="#0ef4f4"/>
            <circle r="8.800" fill="#6c7d90" stroke="#111" stroke-width="1.200"/>
            <ellipse cx="-20" rx="3.800" ry="2.600" fill="#f008ea"/><ellipse cx="20" rx="3.800" ry="2.600" fill="#f008ea"/>
            <circle cx="-8" r="2" fill="#22cfd2"/><circle cx="8" r="2" fill="#22cfd2"/>
            <circle cx="-115.500" r="2.500" fill="#2860d0"/><circle cx="115.500" r="2.500" fill="#2860d0"/>
            <circle cx="-105.500" r="2.500" fill="#c02060"/><circle cx="105.500" r="2.500" fill="#c02060"/>
          </g>
          <g transform="translate(9 243.500)">
            <path d="M0 0V-22" stroke="#18e018" stroke-width="1.500"/><path d="M-1.500 -14h3v7h-3z" fill="#18e018"/>
            <path d="M0 0H24" stroke="#e82020" stroke-width="1.500"/><rect x="13" y="-1.500" width="6" height="3" fill="none" stroke="#e82020"/>
            <circle r="2" fill="#2030e8"/>
            <text x="3" y="-3" font-size="10" fill="#d8dce4">Z</text>
            <text x="1" y="-27" font-size="10" fill="#d8dce4">Y</text>
            <text x="26" y="3" font-size="10" fill="#d8dce4">X</text>
          </g>
          <text x="564" y="251" font-size="8" font-weight="700" fill="#333">20</text>
          <path d="M574 249.500h71v-3" fill="none" stroke="#222"/>
        </svg>
        <div class="model-info">Model Info: Untitled*</div>
      </div>
    </div>

    <div class="r-tools d-flex align-items-center">
      <i class="hd hd-s"></i>
      <svg class="ti ms-1"><use href="#pane"/></svg><i class="cr"></i>
      <i class="hd"></i>
      <svg class="ti"><use href="#foldb"/></svg>
      <svg class="ti"><use href="#fcube"/></svg>
      <svg class="ti"><use href="#fhist"/></svg>
      <svg class="ti"><use href="#fprop"/></svg>
      <svg class="ti"><use href="#fred"/></svg>
      <svg class="ti"><use href="#fax"/></svg><i class="cr"></i>
      <i class="vsep vsep-n"></i>
      <svg class="ti"><use href="#dx"/></svg>
      <svg class="ti"><use href="#stack"/></svg>
      <svg class="ti"><use href="#frd"/></svg>
      <svg class="ti"><use href="#num"/></svg>
      <i class="hd"></i>
      <svg class="ti"><use href="#pane"/></svg><i class="cr"></i>
      <svg class="ti"><use href="#wrench"/></svg>
      <i class="vsep vsep-n"></i>
      <svg class="ti"><use href="#laf"/></svg>
      <svg class="ti"><use href="#raf"/></svg>
      <svg class="ti"><use href="#undob"/></svg>
      <i class="vsep vsep-n"></i>
      <svg class="ti" viewBox="0 0 16 16"><path d="M3 8h10" stroke="#4a5aa0" stroke-width="2"/></svg>
      <svg class="ti" viewBox="0 0 16 16"><path d="M3 8h10M8 3v10" stroke="#4a5aa0" stroke-width="2"/></svg>
      <svg class="ti"><use href="#undob"/></svg>
      <i class="vsep"></i>
      <svg class="ti"><use href="#star"/></svg>
    </div>

    <div class="r-tools2 d-flex align-items-center">
      <i class="hd hd-s"></i>
      <div class="combo d-flex align-items-center"><svg class="ti"><use href="#autos"/></svg><span>Auto</span><i class="cr"></i></div>
      <svg class="ti"><use href="#surf0"/></svg><i class="cr"></i>
      <svg class="ti"><use href="#surf1"/></svg><i class="cr"></i>
      <svg class="ti"><use href="#box3"/></svg>
      <i class="vsep"></i>
      <div class="combo combo-b d-flex align-items-center"><svg class="ti"><use href="#bycomp"/></svg><span>By Comp</span><i class="cr"></i></div>
      <svg class="ti"><use href="#wire"/></svg><i class="cr"></i>
      <svg class="ti"><use href="#cube3"/></svg><i class="cr"></i>
      <svg class="ti"><use href="#lin"/></svg><i class="cr"></i>
      <svg class="ti"><use href="#flat"/></svg><i class="cr"></i>
      <svg class="ti"><use href="#flatb"/></svg><i class="cr"></i>
      <svg class="ti ms-1"><use href="#sqs"/></svg>
      <svg class="ti"><use href="#screen"/></svg>
    </div>

    <div class="rule"></div>

    <div class="cmd-wrap d-flex">
      <div class="cmd-grid">
        <button class="btn cmd">nodes</button><button class="btn cmd">lines</button><button class="btn cmd">surfaces</button><button class="btn cmd">solids</button><button class="btn cmd">quick edit</button>
        <button class="btn cmd">node edit</button><button class="btn cmd">line edit</button><button class="btn cmd">surface edit</button><button class="btn cmd">solid edit</button><button class="btn cmd">edge edit</button>
        <button class="btn cmd">temp nodes</button><button class="btn cmd">length</button><button class="btn cmd">defeature</button><button class="btn cmd">ribs</button><button class="btn cmd">point edit</button>
        <button class="btn cmd">distance</button><div></div><button class="btn cmd">midsurface</button><div></div><button class="btn cmd">autocleanup</button>
        <button class="btn cmd">points</button><div></div><button class="btn cmd">dimensioning</button><div></div><div></div>
      </div>
      <div class="radios">
        <div class="r-item"><i class="r-dot r-on"></i>Geom</div>
        <div class="r-item"><i class="r-dot"></i>1D</div>
        <div class="r-item"><i class="r-dot"></i>2D</div>
        <div class="r-item"><i class="r-dot"></i>3D</div>
        <div class="r-item"><i class="r-dot"></i>Analysis</div>
        <div class="r-item"><i class="r-dot"></i>Tool</div>
        <div class="r-item"><i class="r-dot"></i>Post</div>
      </div>
    </div>
    <div class="bottom-rule"></div>
  </div>
</div>

<div class="status d-flex align-items-center">
  <span>Ready</span>
  <div class="seg seg-a"></div>
  <div class="seg seg-b">Model</div>
  <div class="seg seg-c"></div>
  <div class="toast-n">1 nova notificação</div>
</div>

<div class="taskbar d-flex align-items-center">
  <svg class="win-logo" viewBox="0 0 36 30"><path d="M11 9.500l5.500-.8v6H11zM17.500 8.500l7.500-1v7.200h-7.500zM11 15.700h5.500v6L11 21zM17.500 15.700H25V23l-7.500-1z" fill="#fff"/></svg>
  <div class="search-box d-flex align-items-center">
    <i class="ring"></i>
    <span>Digite aqui para pesquisar</span>
    <svg viewBox="0 0 12 14"><rect x="4" y="1" width="4" height="8" rx="2" fill="none" stroke="#444"/><path d="M2.500 7q0 4 3.500 4t3.500-4M6 11v2M4 13h4" fill="none" stroke="#444"/></svg>
  </div>
  <i class="t-gap"></i>
  <div class="app-cell"><svg viewBox="0 0 36 30"><rect x="13" y="10" width="10" height="10" fill="none" stroke="#fff"/><path d="M10.500 11v8M25.500 11v8" stroke="#fff"/></svg></div>
  <div class="app-cell"><svg viewBox="0 0 36 30"><path d="M10 10h16v12H10z" fill="#f4f4f4"/><path d="M14 10q0-5 4-5t4 5" fill="none" stroke="#eee"/><path d="M14 12h3.500v3.500H14z" fill="#e8452a"/><path d="M18.500 12H22v3.500h-3.500z" fill="#7ab82a"/><path d="M14 16.500h3.500V20H14z" fill="#2a90e8"/><path d="M18.500 16.500H22V20h-3.500z" fill="#f0b820"/></svg></div>
  <div class="app-cell"><svg viewBox="0 0 36 30"><path d="M10 8h7l1 2h8v12H10z" fill="#f8d36a"/><path d="M10 13h16v9H10z" fill="#f4c84a"/><path d="M15 17h6v5h-6z" fill="#3a9ad8"/></svg></div>
  <div class="app-cell run"><svg viewBox="0 0 36 30"><circle cx="18" cy="15" r="8" fill="#e8402a"/><path d="M18 15 11 19a8 8 0 0 0 9 4z" fill="#33a04a"/><path d="M18 15l2 8a8 8 0 0 0 5-12z" fill="#f4c320"/><circle cx="18" cy="15" r="3.500" fill="#3b82e0" stroke="#fff"/></svg></div>
  <div class="app-cell"><svg viewBox="0 0 36 30"><rect x="10" y="6" width="16" height="18" fill="#000"/><path d="M15 8h2.500l1 8V8H21v14q-1.500 0-2.500.3L17.500 14v8.500H15z" fill="#e50914"/></svg></div>
  <div class="app-cell run"><svg viewBox="0 0 36 30"><path d="M9 13l9-6 9 6v9H9z" fill="#fff"/><path d="M9 13l9 5 9-5" fill="none" stroke="#111"/><path d="M18 18l9 4" stroke="#111"/></svg></div>
  <div class="app-cell run"><svg viewBox="0 0 36 30"><rect x="17" y="8" width="9" height="14" fill="#fff" fill-opacity=".8"/><path d="M21 8v14M17 13h9M17 18h9" stroke="#1d7044"/><rect x="10" y="8" width="10" height="14" fill="#1d7044"/><text x="12" y="19" font-size="9" font-weight="700" fill="#fff">X</text></svg></div>
  <div class="app-cell run"><svg viewBox="0 0 36 30"><path d="M10 8l8-2 8 2v8q0 5-8 9-8-4-8-9z" fill="#d8913a"/><path d="M18 6v19" stroke="#777" stroke-width="3"/><path d="M12 10l12 8M24 10l-12 8" stroke="#eee" stroke-width="1.500"/></svg></div>
  <div class="app-cell run"><svg viewBox="0 0 36 30"><path d="M26 17H14q1 4 5 4 3 0 6-2v3q-3 2-7 2-8 0-8-9 0-8 8-9 8 0 8 9zm-4-3q0-4-4-4-3 0-4 4z" fill="#0a78d7"/></svg></div>
  <div class="app-cell run app-on"><svg viewBox="0 0 36 30"><path d="M18 8l-7 13" stroke="#e03030" stroke-width="2"/><path d="M18 8l7 13" stroke="#e8a838" stroke-width="2"/><path d="M11 21h14" stroke="#3a90d8" stroke-width="2"/></svg></div>

  <i class="flex-grow-1"></i>
  <svg class="tray-a" viewBox="0 0 18 30"><circle cx="7" cy="13" r="2.500" fill="none" stroke="#ddd"/><path d="M3 21q0-5 4-5t4 5M11 12a2 2 0 1 1 2 3q2 1 2 4" fill="none" stroke="#ddd"/></svg>
  <i class="t-gap"></i><i class="t-gap"></i>
  <svg class="tray-a" viewBox="0 0 18 30"><path d="M5 17l4-4 4 4" fill="none" stroke="#ddd"/></svg>
  <svg class="tray-a" viewBox="0 0 18 30"><circle cx="8" cy="15" r="5.500" fill="#e8a030"/><circle cx="12" cy="18" r="3.500" fill="#d82a2a"/><path d="M10.500 16.500l3 3M13.500 16.500l-3 3" stroke="#fff" stroke-width=".8"/></svg>
  <svg class="tray-a" viewBox="0 0 18 30"><path d="M3 12h6v7H3zM9 14h6v5H9z" fill="none" stroke="#ddd"/><path d="M5 12v-2h3" fill="none" stroke="#ddd"/></svg>
  <svg class="tray-a" viewBox="0 0 18 30"><path d="M3 20a12 12 0 0 1 12-10M7 20a8 8 0 0 1 8-6M11 20a4 4 0 0 1 4-2" fill="none" stroke="#aaa" stroke-dasharray="1.500 1"/></svg>
  <svg class="tray-a" viewBox="0 0 18 30"><path d="M3 13h3l3-3v10l-3-3H3z" fill="none" stroke="#ddd"/><path d="M11 13l4 4M15 13l-4 4" stroke="#ddd"/></svg>
  <div class="clock"><div>20:21</div><div>04/01/2018</div></div>
  <svg class="note" viewBox="0 0 39 30"><path d="M11 8h13v11H11z" fill="none" stroke="#eee"/><path d="M13 11h9M13 13.500h9M13 16h6" stroke="#eee"/><circle cx="24" cy="20" r="5" fill="#222" stroke="#eee"/><text x="22" y="23" font-size="8" fill="#fff">1</text></svg>
</div>

</body>
</html>
